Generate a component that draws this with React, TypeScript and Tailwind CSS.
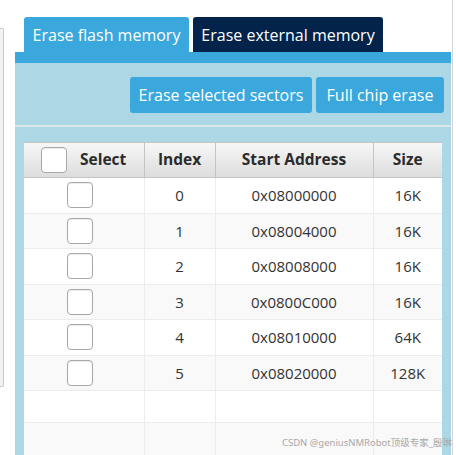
import React from 'react';

const rows = [
  { index: '0', addr: '0x08000000', size: '16K' },
  { index: '1', addr: '0x08004000', size: '16K' },
  { index: '2', addr: '0x08008000', size: '16K' },
  { index: '3', addr: '0x0800C000', size: '16K' },
  { index: '4', addr: '0x08010000', size: '64K' },
  { index: '5', addr: '0x08020000', size: '128K' },
];

const Box = () => (
  <div className="w-[26px] h-[26px] rounded-[4px] border border-[#a8a8a8] bg-white shadow-[inset_0_1px_1px_rgba(0,0,0,0.08)]" />
);

const App = () => {
  return (
    <div
      className="relative w-[456px] h-[455px] overflow-hidden bg-white flex"
      style={{ fontFamily: '"Open Sans", "Noto Sans", sans-serif' }}
    >
      {/* left neighbour panel edge */}
      <div className="w-[15px] shrink-0 flex flex-col pt-[28px]">
        <div className="w-[4px] h-[359px] shrink-0 border border-l-0 border-[#c9c9c9] rounded-r-[2px] bg-[#f2f2f2]" />
      </div>

      <div className="w-[436px] shrink-0 flex flex-col pt-[17px]">
        {/* tabs */}
        <div className="flex shrink-0 gap-[4px] pl-[9px] h-[35px]">
          <div className="w-[165px] rounded-t-[3px] bg-[#3aa8dc] text-white text-[16px] flex items-center justify-center">
            Erase flash memory
          </div>
          <div className="w-[190px] rounded-t-[3px] bg-[#03234b] text-white text-[16px] flex items-center justify-center">
            Erase external memory
          </div>
        </div>
        <div className="h-[11px] shrink-0 bg-[#3aa8dc]" />

        {/* panel */}
        <div className="flex-1 bg-[#acd8e6] flex flex-col">
          <div className="flex shrink-0 justify-end gap-[4px] pt-[14px] pr-[7px]">
            <button className="h-[36px] w-[182px] rounded-[3px] bg-[#3aa8dc] text-white text-[16px]">
              Erase selected sectors
            </button>
            <button className="h-[36px] w-[128px] rounded-[3px] bg-[#3aa8dc] text-white text-[16px]">
              Full chip erase
            </button>
          </div>
          <div className="mt-[12px] h-[2px] shrink-0 bg-[#d9e7ec]" />

          <div className="mt-[15px] mx-[9px] bg-white flex-1">
            <table className="w-[418px] border-collapse table-fixed text-[#333] text-[15px]">
              <colgroup>
                <col className="w-[120px]" />
                <col className="w-[71px]" />
                <col className="w-[158px]" />
                <col className="w-[69px]" />
              </colgroup>
              <thead>
                <tr className="h-[35px] bg-gradient-to-b from-[#f7f7f7] to-[#dcdcdc] text-[15.5px] font-bold text-[#2b2b2b]">
                  <th className="border border-[#c4c4c4] border-l-0 font-bold">
                    <div className="flex items-center pl-[17px] gap-[13px]">
                      <Box />
                      <span>Select</span>
                    </div>
                  </th>
                  <th className="border border-[#c4c4c4] font-bold">Index</th>
                  <th className="border border-[#c4c4c4] font-bold">Start Address</th>
                  <th className="border border-[#c4c4c4] border-r-0 font-bold">Size</th>
                </tr>
              </thead>
              <tbody>
                {rows.map((r, i) => (
                  <tr key={r.index} className={`h-[35.5px] ${i % 2 ? 'bg-[#f9f9f9]' : 'bg-white'}`}>
                    <td className="border border-[#ececec] border-l-0">
                      <div className="flex justify-center pr-[8px]">
                        <Box />
                      </div>
                    </td>
                    <td className="border border-[#ececec] text-center">{r.index}</td>
                    <td className="border border-[#ececec] text-center">{r.addr}</td>
                    <td className="border border-[#ececec] border-r-0 text-center">{r.size}</td>
                  </tr>
                ))}
                <tr className="h-[32px] bg-white">
                  <td className="border border-[#ececec] border-l-0" />
                  <td className="border border-[#ececec]" />
                  <td className="border border-[#ececec]" />
                  <td className="border border-[#ececec] border-r-0" />
                </tr>
                <tr className="h-[36px] bg-[#f9f9f9]">
                  <td className="border border-[#ececec] border-l-0" />
                  <td className="border border-[#ececec]" />
                  <td className="border border-[#ececec]" />
                  <td className="border border-[#ececec] border-r-0" />
                </tr>
              </tbody>
            </table>
          </div>
        </div>
      </div>

      {/* right neighbour edge */}
      <div className="w-[5px] shrink-0 flex">
        <div className="w-[1px] h-full bg-[#d4d4d4] ml-[1px]" />
      </div>

      {/* watermark overlay */}
      <div
        className="absolute right-[4px] bottom-[5px] text-[9.5px] text-[#a8a8a8]"
        style={{ fontFamily: '"Noto Sans", "Noto Sans CJK SC", sans-serif' }}
      >
        CSDN @geniusNMRobot顶级专家_殷琳
      </div>
    </div>
  );
};

export default App;
